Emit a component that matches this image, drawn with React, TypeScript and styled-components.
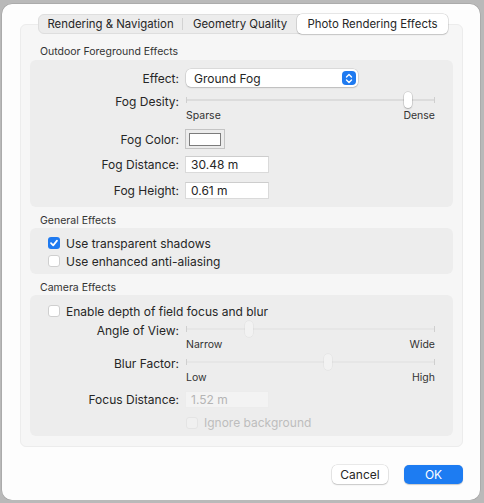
import React from 'react';
import styled, { createGlobalStyle } from 'styled-components';

const GlobalStyle = createGlobalStyle`
  html, body {
    margin: 0;
    padding: 0;
    background: #b9b9b9;
    font-family: 'Inter', 'Liberation Sans', sans-serif;
    color: #262626;
  }
`;

const tabs = ['Rendering & Navigation', 'Geometry Quality', 'Photo Rendering Effects'];

const Checkbox = ({ checked, disabled }: { checked?: boolean; disabled?: boolean }) => (
  <Box checked={ checked } disabled={ disabled }>
    {
      checked &&
      <svg width="10" height="10" viewBox="0 0 10 10">
        <path d="M2 5.2 L4.2 7.4 L8 2.6" fill="none" stroke="#fff" strokeWidth="1.7" strokeLinecap="round" strokeLinejoin="round" />
      </svg>
    }
  </Box>
);

const Slider = ({ value, min, max, disabled }: { value: number; min: string; max: string; disabled?: boolean }) => (
  <SliderWrap>
    <Track disabled={ disabled }>
      <Tick style={ { left: 0 } } />
      <Tick style={ { right: 0 } } />
      <Thumb style={ { left: `${ value * 100 }%` } } disabled={ disabled } />
    </Track>
    <SliderLabels>
      <span>{ min }</span>
      <span>{ max }</span>
    </SliderLabels>
  </SliderWrap>
);

export const App = () => {
  return (
    <>
      <GlobalStyle />
      <Window>
        <Panel>
          <Tabs>
            {
              tabs.map((t, i) => (
                <Tab key={ t } selected={ i === 2 } divider={ i === 0 }>{ t }</Tab>
              ))
            }
          </Tabs>

          <SectionTitle first>Outdoor Foreground Effects</SectionTitle>
          <Group pad="9px 0 8px">
            <Row>
              <Label>Effect:</Label>
              <Popup>
                <span>Ground Fog</span>
                <Stepper>
                  <svg width="8" height="11" viewBox="0 0 8 11">
                    <path d="M1.5 4 L4 1.5 L6.5 4 M1.5 7 L4 9.5 L6.5 7" fill="none" stroke="#fff" strokeWidth="1.4" strokeLinecap="round" strokeLinejoin="round" />
                  </svg>
                </Stepper>
              </Popup>
            </Row>
            <Row top={ 5 } align="start">
              <Label style={ { marginTop: 2 } }>Fog Desity:</Label>
              <Slider value={ 0.89 } min="Sparse" max="Dense" />
            </Row>
            <Row top={ 7 }>
              <Label>Fog Color:</Label>
              <ColorWell><span /></ColorWell>
            </Row>
            <Row top={ 7 }>
              <Label>Fog Distance:</Label>
              <Field>30.48 m</Field>
            </Row>
            <Row top={ 9 }>
              <Label>Fog Height:</Label>
              <Field>0.61 m</Field>
            </Row>
          </Group>

          <SectionTitle>General Effects</SectionTitle>
          <Group pad="6px 0 4px">
            <CheckRow>
              <Checkbox checked />
              <span>Use transparent shadows</span>
            </CheckRow>
            <CheckRow>
              <Checkbox />
              <span>Use enhanced anti-aliasing</span>
            </CheckRow>
          </Group>

          <SectionTitle>Camera Effects</SectionTitle>
          <Group pad="7px 0 6px">
            <CheckRow>
              <Checkbox />
              <span>Enable depth of field focus and blur</span>
            </CheckRow>
            <Row top={ 1 } align="start">
              <Label style={ { marginTop: 2 } }>Angle of View:</Label>
              <Slider value={ 0.255 } min="Narrow" max="Wide" disabled />
            </Row>
            <Row top={ 3 } align="start">
              <Label style={ { marginTop: 2 } }>Blur Factor:</Label>
              <Slider value={ 0.57 } min="Low" max="High" disabled />
            </Row>
            <Row top={ 7 }>
              <Label>Focus Distance:</Label>
              <Field disabled>1.52 m</Field>
            </Row>
            <Row top={ 7 }>
              <span />
              <DisabledCheck>
                <Checkbox disabled />
                <span>Ignore background</span>
              </DisabledCheck>
            </Row>
          </Group>
        </Panel>

        <Footer>
          <Button>Cancel</Button>
          <Button primary>OK</Button>
        </Footer>
      </Window>
    </>
  );
};

export default App;

const Window = styled.div`
  position: relative;
  margin: 4px 4px 0 2px;
  height: 496px;
  background: #fdfdfd;
  border-radius: 10px;
  box-sizing: border-box;
  padding: 20px 17px 0 18px;
  box-shadow: 0 0 0 0.5px rgba(0, 0, 0, 0.15);
`;

const Panel = styled.div`
  position: relative;
  background: #f6f6f6;
  border: 1px solid #ececec;
  border-radius: 6px;
  padding: 0 9px 10px;
  height: 423px;
  box-sizing: border-box;
`;

const Tabs = styled.div`
  display: flex;
  margin: -11px 0 0 8px;
  width: 410px;
  height: 20px;
  background: #ececec;
  border: 1px solid #dedede;
  border-radius: 6px;
  box-sizing: border-box;
  padding: 0;
`;

const Tab = styled.div<{ selected?: boolean; divider?: boolean }>`
  flex: ${ (p) => (p.selected ? '0 0 151px' : p.divider ? '0 0 145px' : '1') };
  display: flex;
  align-items: center;
  justify-content: center;
  font-size: 11.4px;
  color: #262626;
  border-radius: 5px;
  margin: -1px;
  background: ${ (p) => (p.selected ? '#ffffff' : 'transparent') };
  box-shadow: ${ (p) => (p.selected ? '0 0 0 0.5px rgba(0,0,0,0.18), 0 1px 1.5px rgba(0,0,0,0.12)' : 'none') };
  position: relative;

  ${ (p) => p.divider && `
    &:after {
      content: '';
      position: absolute;
      right: 0;
      top: 4px;
      bottom: 4px;
      width: 1px;
      background: #d2d2d2;
    }
  ` }
`;

const SectionTitle = styled.div<{ first?: boolean }>`
  font-size: 10.5px;
  color: #333;
  height: 13px;
  line-height: 13px;
  margin: ${ (p) => (p.first ? '11px 0 2px 10px' : '7px 0 1px 10px') };
`;

const Group = styled.div<{ pad: string }>`
  background: #ededed;
  border-radius: 6px;
  padding: ${ (p) => p.pad };
  display: flex;
  flex-direction: column;
`;

const Row = styled.div<{ top?: number; align?: string }>`
  display: grid;
  grid-template-columns: 149px 1fr;
  column-gap: 6px;
  align-items: ${ (p) => p.align || 'center' };
  margin-top: ${ (p) => p.top || 0 }px;
  padding-right: 18px;
`;

const Label = styled.div`
  text-align: right;
  font-size: 12px;
  color: #262626;
`;

const Popup = styled.div`
  width: 172px;
  height: 18px;
  margin-left: 1px;
  background: #fff;
  border-radius: 5px;
  box-shadow: 0 0 0 0.5px rgba(0,0,0,0.15), 0 1px 1.5px rgba(0,0,0,0.15);
  display: flex;
  align-items: center;
  justify-content: space-between;
  padding: 0 2px 0 8px;
  box-sizing: border-box;
  font-size: 12px;
`;

const Stepper = styled.div`
  width: 14px;
  height: 14px;
  border-radius: 4px;
  background: #1f7af0;
  display: flex;
  align-items: center;
  justify-content: center;
`;

const SliderWrap = styled.div`
  display: flex;
  flex-direction: column;
  margin-left: 1px;
`;

const Track = styled.div<{ disabled?: boolean }>`
  position: relative;
  height: 16px;

  &:before {
    content: '';
    position: absolute;
    left: 0;
    right: 0;
    top: 7px;
    height: 2px;
    border-radius: 1px;
    background: ${ (p) => (p.disabled ? '#e6e6e6' : '#dcdcdc') };
  }
`;

const Tick = styled.span`
  position: absolute;
  top: 5px;
  width: 1px;
  height: 6px;
  background: #cfcfcf;
`;

const Thumb = styled.span<{ disabled?: boolean }>`
  position: absolute;
  top: 0;
  width: 8px;
  height: 16px;
  margin-left: -4px;
  border-radius: 4px;
  background: ${ (p) => (p.disabled ? '#f2f2f2' : '#ffffff') };
  box-shadow: ${ (p) => (p.disabled
    ? '0 0 0 0.5px rgba(0,0,0,0.06)'
    : '0 0 0 0.5px rgba(0,0,0,0.18), 0 1px 1.5px rgba(0,0,0,0.2)') };
`;

const SliderLabels = styled.div`
  display: flex;
  justify-content: space-between;
  font-size: 10.5px;
  color: #333;
  margin-top: 1px;
  line-height: 13px;
`;

const ColorWell = styled.div`
  width: 40px;
  height: 20px;
  box-sizing: border-box;
  border: 1px solid #c4c4c4;
  background: #ececec;
  display: flex;
  align-items: center;
  justify-content: center;

  span {
    width: 30px;
    height: 11px;
    background: #fff;
    border: 1px solid #7c7c7c;
  }
`;

const Field = styled.div<{ disabled?: boolean }>`
  width: 84px;
  height: 17px;
  box-sizing: border-box;
  background: ${ (p) => (p.disabled ? '#f3f3f3' : '#ffffff') };
  border: 1px solid ${ (p) => (p.disabled ? '#ececec' : '#dadada') };
  border-top-color: ${ (p) => (p.disabled ? '#ececec' : '#cdcdcd') };
  font-size: 12px;
  line-height: 15px;
  padding-left: 5px;
  color: ${ (p) => (p.disabled ? '#b5b5b5' : '#262626') };
`;

const CheckRow = styled.label`
  display: flex;
  align-items: center;
  gap: 6px;
  height: 18px;
  padding-left: 18px;
  font-size: 12px;
  color: #262626;
`;

const DisabledCheck = styled.label`
  display: flex;
  align-items: center;
  gap: 6px;
  font-size: 12px;
  color: #bdbdbd;
  margin-left: 1px;
`;

const Box = styled.span<{ checked?: boolean; disabled?: boolean }>`
  width: 12px;
  height: 12px;
  box-sizing: border-box;
  border-radius: 3px;
  display: inline-flex;
  align-items: center;
  justify-content: center;
  background: ${ (p) => (p.checked ? '#1f7af0' : p.disabled ? '#f0f0f0' : '#ffffff') };
  border: ${ (p) => (p.checked ? 'none' : p.disabled ? '1px solid #e4e4e4' : '1px solid #cfcfcf') };
`;

const Footer = styled.div`
  display: flex;
  justify-content: flex-end;
  gap: 16px;
  margin-top: 18px;
  padding-right: 0;
`;

const Button = styled.button<{ primary?: boolean }>`
  font-family: 'Inter', 'Liberation Sans', sans-serif;
  font-size: 12px;
  height: 19px;
  width: ${ (p) => (p.primary ? '59px' : '56px') };
  border: none;
  border-radius: 5px;
  padding: 0;
  color: ${ (p) => (p.primary ? '#ffffff' : '#262626') };
  background: ${ (p) => (p.primary ? '#1d7cf2' : '#ffffff') };
  box-shadow: ${ (p) => (p.primary
    ? '0 0.5px 1px rgba(0,0,0,0.2)'
    : '0 0 0 0.5px rgba(0,0,0,0.15), 0 1px 1.5px rgba(0,0,0,0.15)') };
`;
